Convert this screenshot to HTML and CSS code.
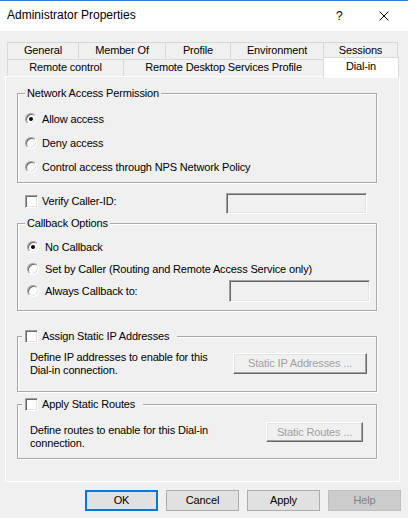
FILE: index.html
```html
<!DOCTYPE html>
<html>
<head>
<meta charset="utf-8">
<link rel="stylesheet" href="styles.css">
</head>
<body>
<div class="window">
  <div class="titlebar">
    <div class="title">Administrator Properties</div>
    <div class="help-q">?</div>
    <div class="close-x">
      <svg width="10" height="10" viewBox="0 0 10 10"><path d="M0.5 0.5 L9.5 9.5 M9.5 0.5 L0.5 9.5" stroke="#000" stroke-width="1" fill="none"/></svg>
    </div>
  </div>

  <div class="tabs">
    <div class="tabrow">
      <div class="tab w-general">General</div>
      <div class="tab w-member">Member Of</div>
      <div class="tab w-profile">Profile</div>
      <div class="tab w-env">Environment</div>
      <div class="tab w-sessions">Sessions</div>
    </div>
    <div class="tabrow">
      <div class="tab w-remote">Remote control</div>
      <div class="tab w-rds">Remote Desktop Services Profile</div>
      <div class="tab tab-active w-dialin">Dial-in</div>
    </div>
  </div>

  <div class="panel">
    <div class="group g1">
      <div class="legend">Network Access Permission</div>
      <div class="opt row24"><span class="radio checked"></span><span>Allow access</span></div>
      <div class="opt row24"><span class="radio"></span><span>Deny access</span></div>
      <div class="opt row24"><span class="radio"></span><span>Control access through NPS Network Policy</span></div>
    </div>

    <div class="verify">
      <div class="opt verify-opt"><span class="check"></span><span>Verify Caller-ID:</span></div>
      <div class="field f-verify"></div>
    </div>

    <div class="group g2">
      <div class="legend">Callback Options</div>
      <div class="opt row22"><span class="radio checked"></span><span>No Callback</span></div>
      <div class="opt row22"><span class="radio"></span><span>Set by Caller (Routing and Remote Access Service only)</span></div>
      <div class="opt row22 spread"><span class="opt"><span class="radio"></span><span>Always Callback to:</span></span><span class="field f-callback"></span></div>
    </div>

    <div class="group g3">
      <div class="legend legend-check"><span class="check"></span><span>Assign Static IP Addresses</span></div>
      <div class="body-row">
        <div class="desc">Define IP addresses to enable for this<br>Dial-in connection.</div>
        <div class="btn btn-dis btn-ip">Static IP Addresses ...</div>
      </div>
    </div>

    <div class="group g4">
      <div class="legend legend-check"><span class="check"></span><span>Apply Static Routes</span></div>
      <div class="body-row">
        <div class="desc">Define routes to enable for this Dial-in<br>connection.</div>
        <div class="btn btn-dis btn-routes">Static Routes ...</div>
      </div>
    </div>
  </div>

  <div class="buttons">
    <div class="btn btn-main btn-default">OK</div>
    <div class="btn btn-main">Cancel</div>
    <div class="btn btn-main">Apply</div>
    <div class="btn btn-main btn-help">Help</div>
  </div>
</div>
</body>
</html>
```

FILE: styles.css
```css
* { box-sizing: border-box; }
html, body { margin: 0; padding: 0; }
body {
  width: 408px;
  height: 518px;
  background: #f0f0f0;
  font-family: "Liberation Sans", Arial, sans-serif;
  font-size: 11px;
  letter-spacing: -0.15px;
  line-height: 13px;
  color: #000;
  overflow: hidden;
}
.window { width: 408px; height: 518px; background: #f0f0f0; }

.titlebar {
  height: 31px;
  background: #fff;
  border-top: 1px solid #2b7ed6;
  display: flex;
  align-items: center;
  padding-left: 7px;
  letter-spacing: 0;
}
.title { flex: 1; font-size: 12px; padding-bottom: 1px; }
.help-q { width: 6px; font-size: 12px; margin-right: 37px; }
.close-x { width: 10px; height: 10px; margin-right: 19px; display: flex; }

.tabs { padding: 11px 0 0 7px; }
.tabrow { display: flex; height: 17px; }
.tab {
  height: 18px;
  border: 1px solid #d9d9d9;
  margin-right: -1px;
  margin-bottom: -1px;
  display: flex;
  align-items: center;
  justify-content: center;
  background: #f0f0f0;
  padding-bottom: 1px;
  white-space: nowrap;
}
.w-general { width: 72px; }
.w-member { width: 88px; }
.w-profile { width: 66px; }
.w-env { width: 94px; }
.w-sessions { width: 75px; }
.w-remote { width: 117px; }
.w-rds { width: 201px; }
.tab-active {
  background: #fff;
  border-bottom: none;
  height: 21px;
  margin-top: -2px;
  position: relative;
  z-index: 2;
  width: 76px;
  padding-bottom: 4px;
}

.panel {
  margin: 0 8px 0 5px;
  height: 406px;
  border: 1px solid #fff;
  background: #f0f0f0;
  padding: 16px 0 0 11px;
  position: relative;
  z-index: 1;
}

.group {
  width: 360px;
  border: 1px solid #a8a8a8;
  box-shadow: inset 1px 1px 0 #fff, 1px 1px 0 #fff;
}
.legend {
  display: flex;
  width: fit-content;
  align-items: center;
  height: 16px;
  margin: -9px 0 0 7px;
  padding: 0 2px;
  background: #f0f0f0;
  white-space: nowrap;
}
.legend-check { margin-left: 4px; padding: 0 8px 0 3px; }
.legend-check .check { margin-right: 4px; }

.opt { display: flex; align-items: center; white-space: nowrap; }
.row24 { height: 24px; padding-left: 7px; }
.row22 { height: 22px; padding-left: 9px; }
.spread { justify-content: space-between; padding-right: 6px; }

.g1 { padding-bottom: 3px; }
.g1 .legend { margin-bottom: 6px; }
.g2 { margin-top: 9px; padding-bottom: 8px; }
.g2 .legend { margin-bottom: 5px; }
.g3 { margin-top: 25px; padding-bottom: 14px; }
.g4 { margin-top: 12px; padding-bottom: 8px; }

.radio {
  width: 12px; height: 12px;
  border-radius: 50%;
  border: 1px solid;
  border-color: #a0a0a0 #ffffff #ffffff #a0a0a0;
  box-shadow: inset 1px 1px 0 #696969, inset -1px -1px 0 #e3e3e3;
  background: #fff;
  margin-right: 5px;
  flex: none;
  display: flex;
  align-items: center;
  justify-content: center;
}
.row22 .radio { margin-right: 6px; }
.radio.checked::after {
  content: "";
  width: 4px; height: 4px;
  border-radius: 50%;
  background: #000;
}
.check {
  width: 13px; height: 13px;
  border: 1px solid;
  border-color: #a0a0a0 #ffffff #ffffff #a0a0a0;
  box-shadow: inset 1px 1px 0 #696969, inset -1px -1px 0 #e3e3e3;
  background: #fff;
  margin-right: 4px;
  flex: none;
}

.verify {
  display: flex;
  align-items: flex-start;
  justify-content: space-between;
  height: 21px;
  margin-top: 10px;
  width: 350px;
  padding-left: 8px;
}
.verify-opt { height: 16px; }
.field {
  display: block;
  height: 21px;
  width: 141px;
  border: 1px solid;
  border-color: #a0a0a0 #ffffff #ffffff #a0a0a0;
  box-shadow: inset 1px 1px 0 #696969, inset -1px -1px 0 #e3e3e3;
  background: #f0f0f0;
}
.f-callback { height: 22px; }

.body-row {
  display: flex;
  justify-content: space-between;
  align-items: flex-start;
  padding: 0 9px 0 12px;
}
.g3 .body-row { margin-top: 7px; }
.g4 .body-row { margin-top: 12px; }
.desc { line-height: 13px; }

.btn {
  display: flex;
  align-items: center;
  justify-content: center;
  white-space: nowrap;
}
.btn-dis {
  height: 21px;
  background: #f0f0f0;
  color: #a0a0a0;
  border: 1px solid;
  border-color: #fff #696969 #696969 #fff;
  box-shadow: inset -1px -1px 0 #a0a0a0, inset 1px 1px 0 #e3e3e3;
}
.btn-ip { width: 134px; margin-top: 2px; }
.btn-routes { width: 97px; height: 20px; margin-top: -2px; margin-right: 4px; }

.buttons {
  display: flex;
  justify-content: flex-end;
  gap: 8px;
  padding: 8px 7px 0 0;
}
.btn-main {
  width: 73px;
  height: 21px;
  background: #e1e1e1;
  border: 1px solid #adadad;
}
.btn-default { border: 2px solid #0078d7; }
.btn-help { background: #cccccc; border-color: #bfbfbf; color: #838383; }
```
